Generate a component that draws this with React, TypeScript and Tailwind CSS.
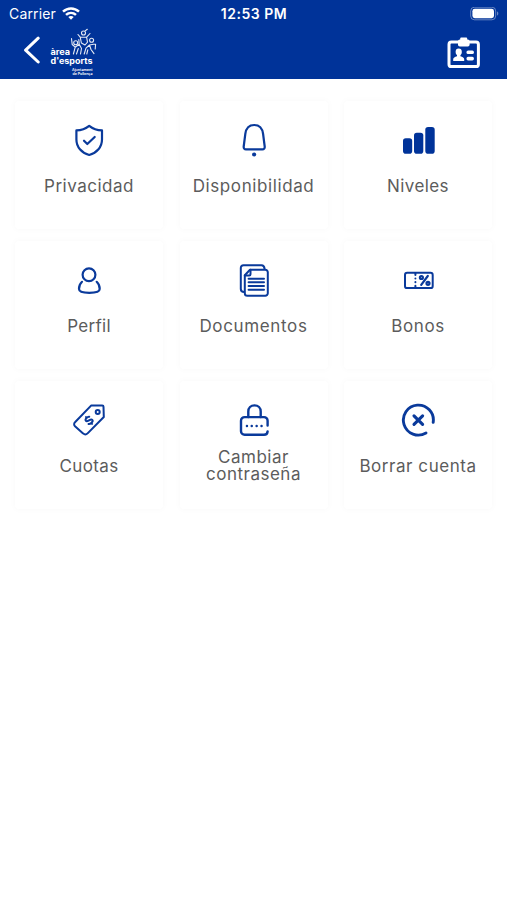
// App.tsx - Account menu screen

import type { ReactNode } from 'react'

interface MenuItem {
  label: string
  tracking: string
  icon: ReactNode
}

function Icon({ children, width = 2 }: { children: ReactNode; width?: number }) {
  return (
    <svg
      viewBox="0 0 36 36"
      className="h-9 w-9 shrink-0 text-[#0a3a9b]"
      fill="none"
      stroke="currentColor"
      strokeWidth={width}
      strokeLinecap="round"
      strokeLinejoin="round"
    >
      {children}
    </svg>
  )
}

const items: MenuItem[] = [
  {
    label: 'Privacidad',
    tracking: 'tracking-[0.5px]',
    icon: (
      <Icon width={2.2}>
        <path d="M18.2 3.8C14.5 6.8 10 8.3 5.4 8.4V17.5C5.4 25 10.5 30.8 18.2 33C25.9 30.8 31 25 31 17.5V8.4C26.4 8.3 21.9 6.8 18.2 3.8Z" />
        <path d="M13 18.7L16.3 22L23.7 15" />
      </Icon>
    ),
  },
  {
    label: 'Disponibilidad',
    tracking: 'tracking-[0.6px]',
    icon: (
      <Icon width={2.2}>
        <path d="M18.2 3C13 3 10 6.5 9.3 12L7.7 24.5C7.5 26.2 8.4 27.4 10 27.4H26.4C28 27.4 28.9 26.2 28.7 24.5L27.1 12C26.4 6.5 23.4 3 18.2 3Z" />
        <circle cx="18.1" cy="32.5" r="2.1" fill="currentColor" stroke="none" />
      </Icon>
    ),
  },
  {
    label: 'Niveles',
    tracking: 'tracking-[0.4px]',
    icon: (
      <Icon>
        <g fill="#003399" stroke="none">
          <rect x="3" y="16.3" width="9.2" height="15.4" rx="2.8" />
          <rect x="14" y="10.7" width="9.3" height="21" rx="2.8" />
          <rect x="25.3" y="5" width="9.4" height="26.7" rx="2.8" />
        </g>
      </Icon>
    ),
  },
  {
    label: 'Perfil',
    tracking: 'tracking-[0.3px]',
    icon: (
      <Icon width={2.2}>
        <circle cx="18" cy="12.7" r="6.4" />
        <path d="M11 19.8C8.8 21.8 8 24.5 8 27C8 29.8 11.5 30.8 18.3 30.8C25 30.8 28.7 29.8 28.7 27C28.7 24.5 27.9 21.8 25.7 19.8" />
      </Icon>
    ),
  },
  {
    label: 'Documentos',
    tracking: 'tracking-[0.65px]',
    icon: (
      <Icon>
        <path d="M8.2 30C6 30 4.8 29 4.8 27V6C4.8 4.3 5.8 3.3 7.5 3.3H25.5C27.5 3.3 28.4 4.5 28.6 7" />
        <path d="M14 7.7H29.3A2.5 2.5 0 0 1 31.8 10.2V31.2A2.5 2.5 0 0 1 29.3 33.7H11.3A2.5 2.5 0 0 1 8.8 31.2V13.2Z" />
        <path d="M8.8 13.6H13.2A1.3 1.3 0 0 0 14.5 12.3V7.7" />
        <path d="M12.6 16.7H28M12.6 20.3H28M12.6 24H28M12.6 27.7H28" />
      </Icon>
    ),
  },
  {
    label: 'Bonos',
    tracking: 'tracking-[0.6px]',
    icon: (
      <Icon>
        <rect x="5" y="10.7" width="27.7" height="15.4" rx="2.2" />
        <path d="M15.4 11V13M15.4 16.4V16.6M15.4 20.1V20.3M15.4 23.7V25.5" />
        <circle cx="21.4" cy="15.5" r="1.5" strokeWidth="2.2" />
        <circle cx="28" cy="21.3" r="1.5" strokeWidth="2.2" />
        <path d="M27.8 14L21.2 22.8" strokeWidth="2.2" />
      </Icon>
    ),
  },
  {
    label: 'Cuotas',
    tracking: 'tracking-[0.4px]',
    icon: (
      <Icon>
        <path d="M20.3 3.4H31.2A1.3 1.3 0 0 1 32.5 4.7L32.8 15L16.6 31.4A3.2 3.2 0 0 1 12.1 31.4L4 24.2A2.6 2.6 0 0 1 4 20.3Z" />
        <circle cx="26.7" cy="10" r="2" />
        <g transform="rotate(-42 18 18.4)">
          <path d="M20.6 15.9C19.8 14.6 15.4 14.5 15.4 16.7C15.4 18.9 20.8 17.8 20.8 20.2C20.8 22.4 16.2 22.2 15.2 20.8M18 14.9V13.9M18 22V23" />
        </g>
      </Icon>
    ),
  },
  {
    label: 'Cambiar contraseña',
    tracking: 'tracking-[0.5px]',
    icon: (
      <Icon width={2.4}>
        <path d="M31.6 23.6V18.7A3.6 3.6 0 0 0 28 15.1H8.6A3.6 3.6 0 0 0 5 18.7V29.2A3.6 3.6 0 0 0 8.6 32.8H28A3.6 3.6 0 0 0 31.6 29.4" />
        <path d="M12.3 15V9.5C12.3 5.8 14.8 3.4 18.5 3.4C22.2 3.4 24.7 5.8 24.7 9.5V15" />
        <path d="M10.9 24H11M15.7 24H15.8M20.6 24H20.7M25.5 24H25.6" />
      </Icon>
    ),
  },
  {
    label: 'Borrar cuenta',
    tracking: 'tracking-[0.55px]',
    icon: (
      <Icon width={2.9}>
        <path d="M33.2 20.3A15 15 0 1 0 26 31" />
        <path d="M14 13.8L22.6 22.4M22.6 13.8L14 22.4" strokeWidth="3.1" />
      </Icon>
    ),
  },
]

function StatusBar() {
  return (
    <div className="grid h-7 grid-cols-3 items-center pl-[9px] pr-[7px] text-[14px] leading-none">
      <div className="flex items-center gap-1.5">
        <span className="tracking-[0.15px]">Carrier</span>
        <svg viewBox="0 0 18 14" className="h-3.5 w-[18px]" fill="none" stroke="currentColor" strokeWidth="2.5">
          <path d="M1 4.6C5.6 0.3 12.4 0.3 17 4.6" />
          <path d="M4 7.9C6.9 5.2 11.1 5.2 14 7.9" />
          <path d="M9 12.8L6.3 10C7.8 8.6 10.2 8.6 11.7 10Z" fill="currentColor" stroke="none" />
        </svg>
      </div>
      <span className="-ml-px text-center font-semibold tracking-[0.5px]">12:53 PM</span>
      <svg viewBox="0 0 30 14" className="h-3.5 w-[30px] justify-self-end">
        <rect x="0.7" y="0.2" width="25" height="12.6" rx="3.8" fill="none" stroke="#fff" strokeOpacity="0.4" />
        <rect x="2.4" y="1.8" width="21.6" height="9.4" rx="2.4" fill="#fff" />
        <path d="M27.2 4.5C28.6 4.9 28.6 8.1 27.2 8.5Z" fill="#fff" fillOpacity="0.5" />
      </svg>
    </div>
  )
}

function Logo() {
  return (
    <svg viewBox="0 0 48 50" className="h-[50px] w-12" fontFamily="Inter, sans-serif" fill="#fff">
      <text fontSize="8.6" fontWeight="700">
        <tspan x="0.5" y="26.7" textLength="19.6" lengthAdjust="spacingAndGlyphs">àrea</tspan>
        <tspan x="0.5" y="36" textLength="42" lengthAdjust="spacingAndGlyphs">d'esports</tspan>
      </text>
      <text fontSize="3.4" fontWeight="600">
        <tspan x="22" y="42.9" textLength="20.5" lengthAdjust="spacingAndGlyphs">Ajuntament</tspan>
        <tspan x="22.5" y="46.9" textLength="20" lengthAdjust="spacingAndGlyphs">de Pollença</tspan>
      </text>
      <g fill="none" stroke="#fff" strokeOpacity="0.9" strokeWidth="1.1" strokeLinecap="round" strokeLinejoin="round">
        <circle cx="33.5" cy="5" r="2" />
        <path d="M35.2 2.9L37.3 1.3" />
        <circle cx="25.7" cy="14.7" r="2" />
        <circle cx="41.6" cy="12.2" r="2" />
        <path d="M28 6.5L30.2 9.2H36.6L40 5.5M30.2 9.2L31.4 15L35 17L37.5 14.2L36.6 9.2" />
        <path d="M21.5 10.5L22.2 16.5L25.2 19.2L23.4 26M25.2 19.2L29.2 16.2L31.5 20.5L30.5 26M28.3 20.5L26.5 26M29.2 16.2L28.8 11.5" />
        <path d="M45.6 16.3L43.5 16.2L39.5 17L36 20.2L34.2 26M39.5 17L41 21.5L44 25.6M37.8 21.8L36.8 26M45.6 16.3L45.2 21" />
      </g>
    </svg>
  )
}

function BadgeIcon() {
  return (
    <svg viewBox="0 0 34 32" className="h-8 w-[34px]" fill="#fff">
      <rect x="2" y="5" width="29.4" height="24.6" rx="2.4" fill="none" stroke="#fff" strokeWidth="3" />
      <rect x="11" y="2.4" width="11.6" height="7.2" rx="1.8" />
      <path d="M14.2 0.4H19.2A1 1 0 0 1 20.2 1.4V4H13.2V1.4A1 1 0 0 1 14.2 0.4Z" />
      <ellipse cx="11.7" cy="15" rx="3.1" ry="3.4" />
      <path d="M10 17H13.4V19.3C15.6 20 17.2 20.8 17.2 22.3V24H6.2V22.3C6.2 20.8 7.8 20 10 19.3Z" />
      <rect x="19.5" y="13.4" width="7.4" height="3.6" rx="1.6" />
      <rect x="19.5" y="19.8" width="7.4" height="3.6" rx="1.6" />
    </svg>
  )
}

export default function App() {
  return (
    <div className="flex min-h-[900px] flex-col bg-white font-[Inter,sans-serif]">
      <header className="h-[79px] bg-[#003399] text-white">
        <StatusBar />
        <div className="flex h-[50px] items-center justify-between pl-[23px] pr-[26px]">
          <div className="flex items-center gap-2.5">
            <svg viewBox="0 0 17 28" className="mb-[6px] h-7 w-[17px]" fill="none" stroke="currentColor" strokeWidth="3" strokeLinecap="round" strokeLinejoin="round">
              <path d="M15.2 2.2L2.6 14.2L15.2 26" />
            </svg>
            <Logo />
          </div>
          <BadgeIcon />
        </div>
      </header>

      <main className="grid grid-cols-[repeat(3,148px)] gap-x-[16.5px] gap-y-3 pl-[15px] pt-[22px]">
        {items.map((item) => (
          <button
            key={item.label}
            className="flex h-32 flex-col items-center gap-2.5 rounded bg-white pt-[21px] shadow-[0_0_6px_1px_rgba(0,0,0,0.025)]"
          >
            {item.icon}
            <span
              className={`flex h-9 w-[130px] items-center justify-center text-center text-[17px] leading-[17px] text-[#5c5c5c] ${item.tracking}`}
            >
              {item.label}
            </span>
          </button>
        ))}
      </main>
    </div>
  )
}
